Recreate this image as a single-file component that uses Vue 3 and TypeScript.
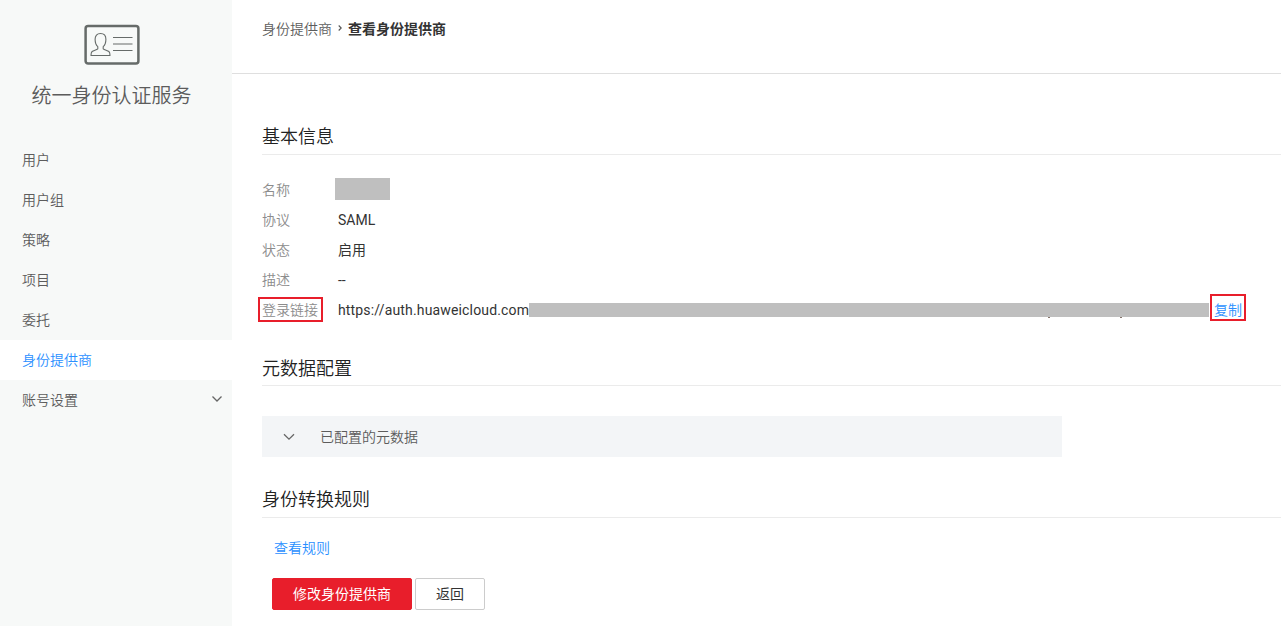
<script setup lang="ts">
interface NavItem {
  label: string
  active?: boolean
  expandable?: boolean
}

const navItems: NavItem[] = [
  { label: '用户' },
  { label: '用户组' },
  { label: '策略' },
  { label: '项目' },
  { label: '委托' },
  { label: '身份提供商', active: true },
  { label: '账号设置', expandable: true },
]

const loginUrl = 'https://auth.huaweicloud.com'
</script>

<template>
  <div class="page">
    <aside class="sidebar">
      <div class="brand">
        <svg class="brand-icon" width="56" height="41" viewBox="0 0 56 41" fill="none">
          <rect x="1.6" y="2" width="52.800" height="37.500" rx="2.500" stroke="#666b69" stroke-width="2.500" />
          <path
            d="M16.500 9.500c-3.600 0-5.400 2.300-5.400 5.800 0 3.400 1.100 6 2.700 7.400v2.100c-1.400 1.200-4.100 1.500-5.700 2.700-.9.800-1.100 2-1.100 4h19c0-2-.2-3.200-1.100-4-1.600-1.200-4.300-1.500-5.700-2.700v-2.100c1.600-1.400 2.700-4 2.700-7.400 0-3.500-1.800-5.800-5.400-5.800z"
            stroke="#666b69" stroke-width="1.100" stroke-linejoin="round"
          />
          <path d="M29 13.500h19.500M29 20h19.500M29 26.500h19.500" stroke="#666b69" stroke-width="1.200" />
        </svg>
        <div class="brand-name">统一身份认证服务</div>
      </div>
      <nav>
        <a v-for="item in navItems" :key="item.label" class="nav-item" :class="{ active: item.active }">
          <span>{{ item.label }}</span>
          <svg v-if="item.expandable" width="12" height="8" viewBox="0 0 12 8" fill="none">
            <path d="M1.500 1.500L6 6l4.500-4.500" stroke="#666" stroke-width="1.300" />
          </svg>
        </a>
      </nav>
    </aside>

    <main class="main">
      <header class="crumbs">
        <a>身份提供商</a>
        <svg width="4" height="6" viewBox="0 0 4 6" fill="none">
          <path d="M.7.500L3.200 3 .7 5.500" stroke="#555" stroke-width="1.100" />
        </svg>
        <strong>查看身份提供商</strong>
      </header>

      <section class="basic">
        <h2>基本信息</h2>
        <div class="row"><span class="label">名称</span><span class="mask-name"></span></div>
        <div class="row"><span class="label">协议</span><span>SAML</span></div>
        <div class="row"><span class="label">状态</span><span>启用</span></div>
        <div class="row"><span class="label">描述</span><span>--</span></div>
        <div class="row">
          <span class="label"><span class="marked">登录链接</span></span>
          <span class="url">{{ loginUrl }}</span>
          <svg class="mask-url" width="680" height="15" viewBox="0 0 680 15">
            <rect width="680" height="14" fill="#bfbfbf" />
            <path d="M519 14h2M591 14h2" transform="translate(0 .5)" stroke="#86756c" />
          </svg>
          <a class="copy">复制</a>
        </div>
      </section>

      <section class="metadata">
        <h2>元数据配置</h2>
        <div class="panel">
          <svg width="12" height="8" viewBox="0 0 12 8" fill="none">
            <path d="M1 1.200l5 5 5-5" stroke="#666" stroke-width="1.300" />
          </svg>
          <span>已配置的元数据</span>
        </div>
      </section>

      <section class="rules">
        <h2>身份转换规则</h2>
        <a class="rule-link">查看规则</a>
        <div class="actions">
          <button class="btn primary">修改身份提供商</button>
          <button class="btn">返回</button>
        </div>
      </section>
    </main>
  </div>
</template>

<style>
body {
  margin: 0;
  background: #fff;
}
</style>

<style scoped>
* {
  box-sizing: border-box;
}
.page {
  display: flex;
  height: 626px;
  overflow: hidden;
  font: 350 14px/20px Roboto, "Noto Sans CJK SC", sans-serif;
  color: #333;
}
.sidebar {
  flex: 0 0 232px;
  background: #f7f9f8;
  color: #5c5c5c;
}
.brand {
  display: flex;
  flex-direction: column;
  align-items: center;
  width: 223px;
  height: 140px;
  padding-top: 24px;
}
.brand-icon {
  margin-left: 1px;
}
.brand-name {
  margin-top: 16px;
  font-size: 20px;
  line-height: 30px;
}
.nav-item {
  display: flex;
  align-items: center;
  justify-content: space-between;
  height: 40px;
  padding: 0 9px 0 22px;
}
.nav-item svg {
  margin-bottom: 2px;
}
.nav-item.active {
  background: #fff;
  color: #2a8fff;
}
.main {
  flex: 1;
  min-width: 0;
}
.crumbs {
  display: flex;
  align-items: center;
  height: 74px;
  padding: 0 30px 15px;
  border-bottom: 1px solid #dfdfdf;
  color: #5c5c5c;
}
.crumbs svg {
  margin: 0 6px 2px 6px;
}
.crumbs strong {
  font-weight: 700;
  color: #333;
}
section {
  padding-left: 30px;
}
h2 {
  margin: 0;
  height: 37px;
  border-bottom: 1px solid #ebebeb;
  font-size: 18px;
  line-height: 38px;
  font-weight: 350;
  color: #222;
}
.metadata h2 {
  line-height: 39px;
}
.basic {
  padding-top: 44px;
}
.basic h2 {
  margin-bottom: 20px;
}
.row {
  display: flex;
  align-items: center;
  height: 30px;
  font-weight: 400;
}
.label {
  flex: 0 0 76px;
  color: #8c8c8c;
  font-weight: 350;
}
.mask-name {
  width: 55px;
  height: 22px;
  margin: 0 0 2px -3px;
  background: #bfbfbf;
}
.marked {
  display: inline-block;
  width: 65px;
  height: 25px;
  margin: 0 0 2px -4px;
  padding-left: 2px;
  border: 2px solid #e81e2b;
  line-height: 22px;
  vertical-align: top;
}
.url {
  width: 191px;
  white-space: nowrap;
  letter-spacing: 0.16px;
}
.mask-url {
  flex: none;
  margin-top: 1px;
}
.copy {
  width: 36px;
  height: 27px;
  margin: 0 0 5px 1px;
  border: 2px solid #e81e2b;
  padding-top: 4px;
  line-height: 20px;
  text-align: center;
  color: #2a8fff;
  font-weight: 350;
}
.metadata,
.rules {
  padding-top: 24px;
}
.panel {
  display: flex;
  align-items: center;
  gap: 25px;
  width: 800px;
  height: 41px;
  margin-top: 30px;
  padding-left: 21px;
  background: #f3f5f7;
  color: #5c5c5c;
}
.rule-link {
  display: block;
  margin: 20px 0 20px 12px;
  color: #2a8fff;
}
.actions {
  display: flex;
  gap: 3px;
  padding-left: 10px;
}
.btn {
  width: 70px;
  height: 32px;
  padding: 0;
  border: 1px solid #ccc;
  border-radius: 2px;
  background: #fff;
  color: #333;
  font: inherit;
  font-weight: 400;
}
.btn.primary {
  width: 140px;
  border-color: #e81e2b;
  background: #e81e2b;
  color: #fff;
}
</style>
